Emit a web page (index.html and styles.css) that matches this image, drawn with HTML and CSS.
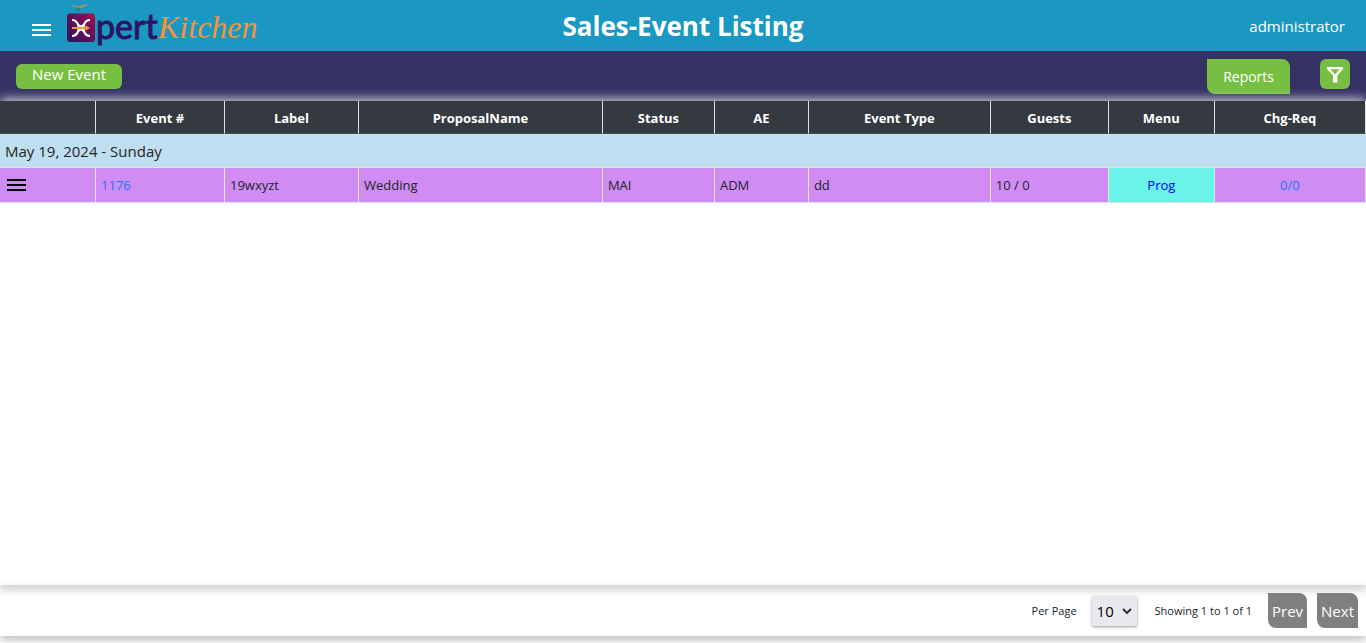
FILE: index.html
```html
<!DOCTYPE html>
<html lang="en">
<head>
<meta charset="utf-8">
<meta name="viewport" content="width=device-width, initial-scale=1">
<title>Sales-Event Listing</title>
<link rel="stylesheet" href="styles.css">
</head>
<body>
<header class="topbar">
  <div class="brand">
    <button class="icon-button nav-toggle" type="button" aria-label="Open navigation">
      <svg width="20" height="14" viewBox="0 0 20 14"><path d="M0 2h19M0 7h19M0 12h19" stroke="currentColor" stroke-width="2"/></svg>
    </button>
    <a class="logo" href="#" aria-label="Xpert Kitchen">
      <svg width="196" height="51" viewBox="0 0 196 51">
        <defs>
          <linearGradient id="tile" x1="0" y1="1" x2="1" y2="0">
            <stop offset="0.1" stop-color="#35125f"/>
            <stop offset="0.55" stop-color="#64105a"/>
            <stop offset="1" stop-color="#b00b50"/>
          </linearGradient>
        </defs>
        <path d="M6 6.500q3-1 5 0t5-.5M16 6l5-.8M15 7.500q3-1 2-1" fill="none" stroke="#d98c4a" stroke-width="1.200"/>
        <path d="M9 9q2 1 5 0M11 10.500l3-.5" fill="none" stroke="#278571" stroke-width="1.300"/>
        <rect x="1" y="13.500" width="28" height="28.500" rx="3" fill="url(#tile)"/>
        <path d="M6 20C10 20 11 22 12 24.500Q13.500 28 12 31.500C11 34 10 36 6 36M24 20C20 20 19 22 18 24.500Q16.500 28 18 31.500C19 34 20 36 24 36M12 24.500Q15 28 18 24.500M12 31.500Q15 28 18 31.500" fill="none" stroke="#fff" stroke-width="2.200"/>
        <path d="M6 28h14" stroke="#f39431" stroke-width="2"/>
        <path d="M19.500 25.300 24 28l-4.500 2.700z" fill="#f39431"/>
        <text class="logo-pert" x="30" y="39">pert</text>
        <text class="logo-kitchen" x="92" y="38">Kitchen</text>
      </svg>
    </a>
  </div>
  <h1 class="page-title">Sales-Event Listing</h1>
  <a class="user" href="#">administrator</a>
</header>

<div class="toolbar">
  <button class="button new-event" type="button">New Event</button>
  <div class="toolbar-actions">
    <button class="button leaf reports" type="button">Reports</button>
    <button class="button filter" type="button" aria-label="Filter">
      <svg width="18" height="18" viewBox="0 0 18 18"><path fill-rule="evenodd" d="M1 2h16v2l-5.500 6.500v7h-4.500v-7L1 4zM4.500 4.200l4.500 5.300 4.500-5.300z" fill="currentColor"/></svg>
    </button>
  </div>
</div>

<main class="content">
  <table class="events">
    <colgroup>
      <col class="col-actions"><col class="col-number"><col class="col-label"><col class="col-proposal"><col class="col-status"><col class="col-ae"><col class="col-type"><col class="col-guests"><col class="col-menu"><col class="col-change">
    </colgroup>
    <thead>
      <tr><th></th><th>Event #</th><th>Label</th><th>ProposalName</th><th>Status</th><th>AE</th><th>Event Type</th><th>Guests</th><th>Menu</th><th>Chg-Req</th></tr>
    </thead>
    <tbody>
      <tr class="date-row"><td colspan="10">May 19, 2024 - Sunday</td></tr>
      <tr class="event-row">
        <td><button class="icon-button row-menu" type="button" aria-label="Event actions"><svg width="20" height="14" viewBox="0 0 20 14"><path d="M0 2h19M0 7h19M0 12h19" stroke="currentColor" stroke-width="2"/></svg></button></td>
        <td><a href="#">1176</a></td>
        <td>19wxyzt</td>
        <td>Wedding</td>
        <td>MAI</td>
        <td>ADM</td>
        <td>dd</td>
        <td>10 / 0</td>
        <td class="menu-cell"><a href="#">Prog</a></td>
        <td class="change-cell"><a href="#">0/0</a></td>
      </tr>
    </tbody>
  </table>
</main>

<footer class="pager">
  <label for="per-page">Per Page</label>
  <span class="select-wrap">
    <select id="per-page" class="per-page"><option>10</option><option>25</option><option>50</option></select>
    <svg class="chevron" width="10" height="8" viewBox="0 0 10 8"><path d="M1 2l4 4 4-4" fill="none" stroke="#212529" stroke-width="1.800"/></svg>
  </span>
  <span class="range">Showing 1 to 1 of 1</span>
  <button class="button leaf page-button prev" type="button">Prev</button>
  <button class="button leaf page-button" type="button">Next</button>
</footer>
</body>
</html>
```
FILE: styles.css
```css
* {
  box-sizing: border-box;
}

body {
  margin: 0;
  min-height: 100vh;
  padding-bottom: 7px;
  display: flex;
  flex-direction: column;
  background: #fff;
  color: #212529;
  font: 15px/24px "Open Sans", "Noto Sans", sans-serif;
}

a {
  color: #1a73ff;
  text-decoration: none;
}

svg {
  display: block;
}

button,
select {
  font: inherit;
}

.topbar {
  display: grid;
  grid-template-columns: 1fr auto 1fr;
  height: 51px;
  background: #1a98c1;
  color: #fff;
}

.brand {
  display: flex;
  padding-left: 32px;
}

.icon-button {
  padding: 0;
  border: 0;
  background: none;
  color: inherit;
}

.nav-toggle {
  padding-top: 8px;
}

.logo {
  margin-left: 14px;
}

.logo-pert {
  fill: #2b1466;
  stroke: #2b1466;
  stroke-width: 1px;
  font: 400 34px Lato, sans-serif;
}

.logo-kitchen {
  fill: #f2953a;
  font: italic 32px "Liberation Serif", serif;
}

.page-title {
  margin: 0;
  font-size: 26px;
  line-height: 52px;
  font-weight: 700;
}

.user {
  justify-self: end;
  padding-right: 21px;
  color: #fff;
  line-height: 52px;
}

.toolbar {
  display: flex;
  justify-content: space-between;
  height: 50px;
  padding: 8px 16px 0;
  background: #343264;
}

.button {
  padding: 0 16px;
  border: 0;
  border-radius: 6px;
  background: #77bf43;
  color: #fff;
}

.new-event {
  height: 25px;
  margin-top: 5px;
  padding-bottom: 4px;
  line-height: 21px;
}

.toolbar-actions {
  display: flex;
  align-items: flex-start;
  gap: 30px;
}

.leaf {
  height: 35px;
  border-radius: 0 8px;
}

.reports {
  font-size: 14px;
}

.filter {
  width: 30px;
  height: 30px;
  padding: 6px;
}

.content {
  flex: 1;
  box-shadow: 0 -2px 10px #ffffffcc, 0 4px 8px #00000040;
}

.events {
  width: 100%;
  table-layout: fixed;
  border-collapse: separate;
  border-spacing: 0;
}

.col-actions { width: 7.03%; }
.col-number { width: 9.44%; }
.col-label { width: 9.81%; }
.col-proposal { width: 17.86%; }
.col-status { width: 8.2%; }
.col-ae { width: 6.88%; }
.col-type { width: 13.32%; }
.col-guests { width: 8.64%; }
.col-menu { width: 7.76%; }
.col-change { width: 11.06%; }

.events th {
  height: 33px;
  padding: 2px 0 0;
  border-right: 1px solid #dee2e6;
  border-bottom: 1px solid #454d55;
  background: #343a40;
  color: #fff;
  font-size: 13px;
  font-weight: 700;
}

.events td {
  padding: 0 5px;
  border-right: 1px solid #dee2e6;
  border-bottom: 1px solid #dee2e6;
}

.events .date-row td {
  height: 34px;
  border-right: 0;
  background: #bfdeef;
}

.events .event-row td {
  height: 35px;
  padding-bottom: 1px;
  background: #d08cf2;
  font-size: 13px;
}

.row-menu {
  display: block;
  margin-left: 2px;
  color: #000;
}

.events .event-row .menu-cell {
  background: #6bf2e9;
  text-align: center;
}

.menu-cell a {
  color: #00f;
}

.change-cell {
  text-align: center;
}

.pager {
  display: flex;
  align-items: center;
  justify-content: flex-end;
  height: 51px;
  padding: 0 8px;
  box-shadow: 0 4px 8px #00000040;
  font-size: 11px;
}

.select-wrap {
  display: grid;
  align-items: center;
  margin: 0 18px 0 15px;
}

.select-wrap > * {
  grid-area: 1 / 1;
}

.per-page {
  width: 45px;
  height: 30px;
  padding: 0 5px;
  border: 0;
  border-radius: 2px;
  appearance: none;
  background: #e9e9ed;
  box-shadow: 0 1px 3px #00000066;
  color: #000;
  font-size: 15px;
}

.chevron {
  justify-self: end;
  margin-right: 5px;
  pointer-events: none;
}

.page-button {
  padding: 0 4px;
  background: #808080;
  font-size: 15px;
}

.prev {
  margin: 0 10px 0 16px;
}
```
